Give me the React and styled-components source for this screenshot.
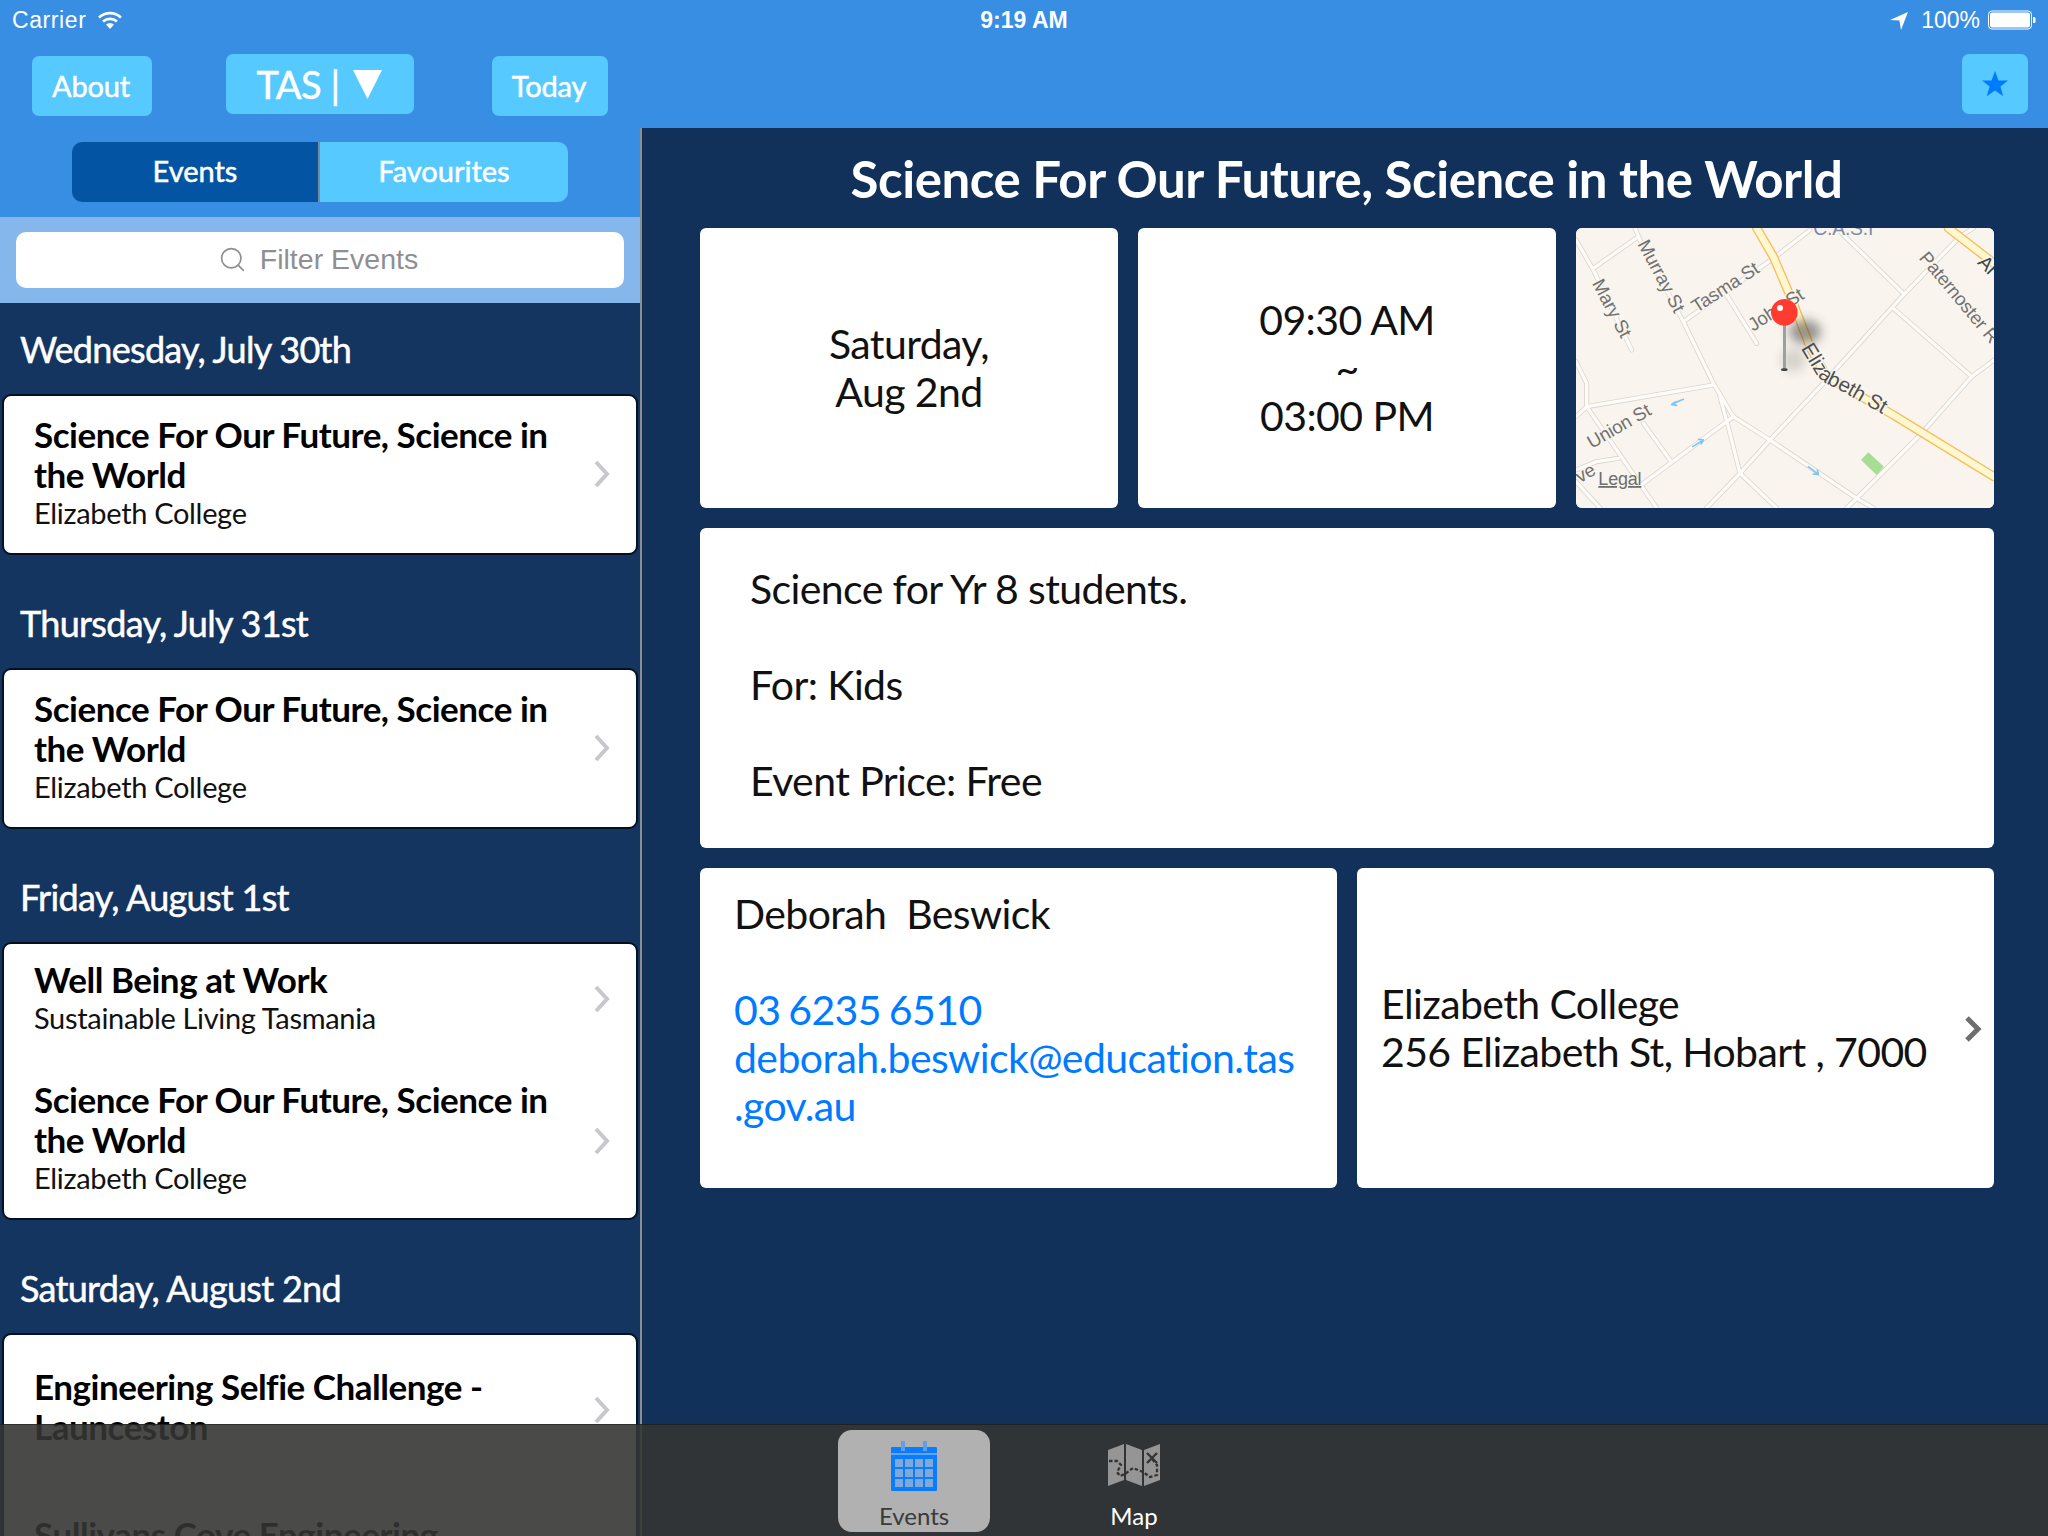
import React from 'react';
import styled, { createGlobalStyle } from 'styled-components';
import { Search } from 'lucide-react';

const GlobalStyle = createGlobalStyle`
  html, body {
    margin: 0;
    padding: 0;
    background: #11305a;
    font-family: 'Lato', 'Liberation Sans', sans-serif;
  }
  * { box-sizing: border-box; }
`;

const Screen = styled.div`
  position: relative;
  width: 2048px;
  height: 1536px;
  overflow: hidden;
  display: grid;
  grid-template-columns: 640px 2px 1fr;
`;

const StatusBar = styled.div`
  position: absolute;
  top: 0;
  left: 0;
  right: 0;
  height: 40px;
  padding: 0 12px;
  display: grid;
  grid-template-columns: 1fr auto 1fr;
  align-items: center;
  color: #fff;
  font-family: 'Liberation Sans', sans-serif;
  font-size: 23px;
  z-index: 5;
`;

const StatusLeft = styled.div`
  display: flex;
  align-items: center;
  gap: 11px;
  letter-spacing: 0.6px;
`;

const StatusTime = styled.div`
  font-weight: 700;
  font-size: 23px;
`;

const StatusRight = styled.div`
  display: flex;
  align-items: center;
  justify-content: flex-end;
  gap: 8px;
`;

const Side = styled.aside`
  height: 1536px;
  overflow: hidden;
  background: #14355f;
  display: flex;
  flex-direction: column;
`;

const Divider = styled.div`
  background: linear-gradient(#388ee3 0 128px, #8e8e8e 128px);
`;

const SideHeader = styled.div`
  flex: none;
  background: #388ee3;
  height: 217px;
  padding: 54px 32px 0;
`;

const NavRow = styled.div`
  display: flex;
  justify-content: space-between;
  align-items: flex-start;
`;

const NavButton = styled.button`
  border: 0;
  width: ${(p) => p.$w}px;
  height: 60px;
  margin-top: 2px;
  padding: 0 2px 2px 0;
  border-radius: 7px;
  background: #56caff;
  color: #fff;
  font-family: inherit;
  font-size: 29px;
  letter-spacing: -0.2px;
  -webkit-text-stroke: 0.5px #fff;
`;

const RegionButton = styled(NavButton)`
  margin-top: 0;
  margin-right: 5px;
  padding: 0;
  font-size: 38px;
  letter-spacing: -0.5px;
  display: flex;
  align-items: center;
  justify-content: center;
  gap: 14px;
`;

const Segment = styled.div`
  margin: 26px 40px 0;
  height: 60px;
  display: grid;
  grid-template-columns: 246px 250px;
  border-radius: 10px;
  overflow: hidden;
`;

const SegmentItem = styled.div`
  display: flex;
  align-items: center;
  justify-content: center;
  padding-bottom: 3px;
  color: #fff;
  font-size: 29px;
  -webkit-text-stroke: 0.5px #fff;
  background: ${(p) => (p.$active ? '#0355a3' : '#56caff')};
  border-left: ${(p) => (p.$active ? '0' : '2px solid #7d8a99')};
`;

const SearchBar = styled.div`
  flex: none;
  height: 86px;
  padding: 15px 16px;
  background: #85b7ec;
`;

const SearchField = styled.div`
  height: 56px;
  padding: 0 4px 1px 0;
  border-radius: 10px;
  background: #fff;
  color: #8e8e93;
  font-family: 'Liberation Sans', sans-serif;
  font-size: 28.5px;
  display: flex;
  align-items: center;
  justify-content: center;
  gap: 13px;
`;

const DayList = styled.div`
  padding: 0 2px;
`;

const DayHeading = styled.h2`
  margin: 0;
  height: 91px;
  padding: 0 0 0 18px;
  display: flex;
  align-items: center;
  color: #fff;
  font-size: 36px;
  font-weight: 400;
  letter-spacing: -0.7px;
  -webkit-text-stroke: 0.5px #fff;
`;

const DayCard = styled.div`
  background: #fff;
  border: 2px solid #05101f;
  border-radius: 9px;
  margin-bottom: 22px;
`;

const EventRow = styled.div`
  position: relative;
  height: ${(p) => p.$h}px;
  padding: ${(p) => p.$pt}px 60px 0 30px;
`;

const EventTitle = styled.div`
  font-size: 35px;
  line-height: 40px;
  font-weight: 700;
  letter-spacing: -0.47px;
  color: #000;
`;

const EventPlace = styled.div`
  margin-top: 1px;
  font-size: 29px;
  line-height: 36px;
  letter-spacing: -0.32px;
  color: #111;
`;

const RowChevron = styled.svg`
  position: absolute;
  right: 25px;
  top: ${(p) => p.$top}px;
  width: 18px;
  height: 28px;
  margin-top: -14px;
  fill: none;
  stroke: #c7c7cc;
  stroke-width: 4;
`;

const Main = styled.main`
  display: flex;
  flex-direction: column;
`;

const MainHeader = styled.div`
  flex: none;
  height: 128px;
  background: #388ee3;
  padding: 54px 20px 0 0;
  display: flex;
  justify-content: flex-end;
  align-items: flex-start;
`;

const StarButton = styled.div`
  width: 66px;
  height: 60px;
  border-radius: 7px;
  background: #56caff;
  display: flex;
  align-items: center;
  justify-content: center;
`;

const MainTitle = styled.h1`
  margin: 0;
  height: 100px;
  display: flex;
  align-items: center;
  justify-content: center;
  padding-left: 3px;
  color: #fff;
  font-size: 51px;
  font-weight: 700;
  letter-spacing: -0.45px;
`;

const Details = styled.div`
  padding: 0 54px 0 58px;
  display: flex;
  flex-direction: column;
  gap: 20px;
`;

const TopCards = styled.div`
  display: grid;
  grid-template-columns: repeat(3, 1fr);
  gap: 20px;
  height: 280px;
`;

const BottomCards = styled.div`
  display: grid;
  grid-template-columns: 1fr 1fr;
  gap: 20px;
  height: 320px;
`;

const Card = styled.div`
  position: relative;
  background: #fff;
  border-radius: 6px;
  color: #111;
  font-size: 41px;
  line-height: 48px;
  letter-spacing: -0.6px;
  overflow: hidden;
`;

const CenterCard = styled(Card)`
  display: flex;
  align-items: center;
  justify-content: center;
  text-align: center;
`;

const DescriptionCard = styled(Card)`
  height: 320px;
  padding: 37px 50px;
`;

const ContactCard = styled(Card)`
  padding: 22px 34px;
  white-space: pre-wrap;
`;

const PlaceCard = styled(Card)`
  display: flex;
  align-items: center;
  padding: 0 24px;
`;

const BlueLink = styled.div`
  color: #007aff;
  word-spacing: -2px;
`;

const PlaceChevron = styled.svg`
  position: absolute;
  right: 11px;
  top: 147px;
  width: 20px;
  height: 28px;
  fill: none;
  stroke: #6e6e6e;
  stroke-width: 5;
`;

const TabBar = styled.nav`
  position: absolute;
  left: 0;
  right: 0;
  bottom: 0;
  height: 112px;
  background: rgba(53, 53, 51, 0.895);
  border-top: 1px solid rgba(0, 0, 0, 0.35);
  display: flex;
  padding: 5px 0 0 838px;
  gap: 68px;
  z-index: 4;
`;

const TabItem = styled.div`
  width: 152px;
  height: 102px;
  border-radius: 14px;
  background: ${(p) => (p.$active ? '#b1b1b1' : 'transparent')};
  color: ${(p) => (p.$active ? '#3a3a3a' : '#fff')};
  font-size: 24px;
  display: flex;
  flex-direction: column;
  align-items: center;
  justify-content: flex-end;
  padding-bottom: 2px;
  gap: ${(p) => (p.$active ? '10px' : '15px')};
`;

const MapLabel = styled.text`
  font-family: 'Liberation Sans', sans-serif;
  font-size: ${(p) => p.$size || 56}px;
  fill: ${(p) => p.$fill || '#717171'};
  stroke: #f9f5ee;
  stroke-width: 8px;
  paint-order: stroke;
`;

const minorRoads = [
  '48,60 100,150 215,390',
  '100,145 235,50',
  '225,24 240,60 370,305 460,490 520,590',
  '370,305 640,115 750,30',
  '500,225 590,370',
  '48,590 80,560 460,495',
  '48,425 80,490 80,560 290,864',
  '250,790 520,590 630,660 890,835 940,864',
  '480,530 510,640 540,760',
  '250,610 330,720',
  '440,864 540,760 630,660 790,490 1030,225 1200,50 1240,24',
  '840,35 1030,220',
  '1000,265 1235,470',
  '1302,420 1235,470 1080,645 890,835 860,864',
  '540,760 650,864',
  '48,750 110,725 175,715',
  '48,785 120,864',
];

const mainRoads = [
  '590,24 640,110 700,250 750,380 800,470 1000,585 1302,770',
  '1165,24 1302,130',
];

const flowArrows = [
  'M370,538 L335,553 M335,553 L348,545 M335,553 L350,556',
  'M398,680 L430,660 M430,660 L416,658 M430,660 L424,672',
  'M745,740 L775,763 M775,763 L760,762 M775,763 L772,750',
];

function MapView() {
  return (
    <svg width="100%" height="100%" viewBox="48 24 1254 840" style={{ display: 'block' }}>
      <defs>
        <filter id="pinShadow" x="-100%" y="-100%" width="300%" height="300%">
          <feGaussianBlur stdDeviation="16" />
        </filter>
        <path id="elizabethCurve" d="M722,385 L770,465 Q790,490 830,505 L1010,606" />
      </defs>
      <rect x="48" y="24" width="1254" height="840" fill="#f9f5ee" />
      <g fill="none" strokeLinejoin="round" strokeLinecap="round">
        {minorRoads.map((r) => (
          <polyline key={r} points={r} stroke="#dcd6ca" strokeWidth="15" />
        ))}
        {minorRoads.map((r) => (
          <polyline key={`${r}-in`} points={r} stroke="#fdfcfa" strokeWidth="10" />
        ))}
        {mainRoads.map((r) => (
          <polyline key={r} points={r} stroke="#f6bd5d" strokeWidth="28" />
        ))}
        {mainRoads.map((r) => (
          <polyline key={`${r}-in`} points={r} stroke="#fff7cf" strokeWidth="20" />
        ))}
        {flowArrows.map((d) => (
          <path key={d} d={d} stroke="#7cc4f8" strokeWidth="5" />
        ))}
      </g>
      <polygon points="925,697 972,740 950,765 903,720" fill="#a9dc95" />
      <MapLabel x="760" y="45" $fill="#7d8aa8" $size="58">C.A.S.I</MapLabel>
      <MapLabel transform="translate(232,72) rotate(62)">Murray St</MapLabel>
      <MapLabel transform="translate(95,190) rotate(62)">Mary St</MapLabel>
      <MapLabel transform="translate(410,280) rotate(-33)">Tasma St</MapLabel>
      <MapLabel transform="translate(580,335) rotate(-33)">John St</MapLabel>
      <MapLabel transform="translate(1075,115) rotate(50)">Paternoster R</MapLabel>
      <MapLabel transform="translate(1250,130) rotate(45)" $fill="#444" $size="58">Ar</MapLabel>
      <MapLabel transform="translate(95,687) rotate(-30)">Union St</MapLabel>
      <MapLabel transform="translate(60,790) rotate(-30)">ve</MapLabel>
      <MapLabel $fill="#4f4f4f" $size="62">
        <textPath href="#elizabethCurve">Elizabeth St</textPath>
      </MapLabel>
      <text x="115" y="795" fontFamily="'Liberation Sans', sans-serif" fontSize="54" fill="#6e6e6e" textDecoration="underline">Legal</text>
      <ellipse cx="735" cy="335" rx="48" ry="36" fill="#333" opacity="0.5" filter="url(#pinShadow)" />
      <ellipse cx="700" cy="420" rx="36" ry="36" fill="#333" opacity="0.18" filter="url(#pinShadow)" />
      <rect x="669" y="315" width="9" height="133" fill="#9aa0a6" />
      <ellipse cx="673" cy="449" rx="10" ry="4" fill="#444" />
      <circle cx="673" cy="277" r="40" fill="#ff3b30" />
      <circle cx="660" cy="264" r="9" fill="#fff" />
    </svg>
  );
}

const science = ['Science For Our Future, Science in', 'the World'];

const days = [
  {
    heading: 'Wednesday, July 30th',
    events: [{ title: science, place: 'Elizabeth College', h: 157, pt: 18, chevron: 78 }],
  },
  {
    heading: 'Thursday, July 31st',
    events: [{ title: science, place: 'Elizabeth College', h: 157, pt: 18, chevron: 78 }],
  },
  {
    heading: 'Friday, August 1st',
    events: [
      { title: ['Well Being at Work'], place: 'Sustainable Living Tasmania', h: 119, pt: 15, chevron: 55 },
      { title: science, place: 'Elizabeth College', h: 155, pt: 16, chevron: 78 },
    ],
  },
  {
    heading: 'Saturday, August 2nd',
    events: [
      { title: ['Engineering Selfie Challenge -', 'Launceston'], h: 160, pt: 31, chevron: 75 },
      { title: ['Sullivans Cove Engineering'], h: 120, pt: 19, chevron: 78 },
    ],
  },
];

export default function App() {
  return (
    <Screen>
      <GlobalStyle />
      <StatusBar>
        <StatusLeft>
          Carrier
          <svg width="26" height="20" viewBox="0 0 26 20" fill="none" stroke="#fff" strokeWidth="2.6">
            <path d="M2 7.500a16 16 0 0 1 22 0" />
            <path d="M6 11.500a10.500 10.500 0 0 1 14 0" />
            <path d="M13 19l-4-4.500a6 6 0 0 1 8 0z" fill="#fff" stroke="none" />
          </svg>
        </StatusLeft>
        <StatusTime>9:19 AM</StatusTime>
        <StatusRight>
          <svg width="20" height="20" viewBox="0 0 20 20" style={{ marginRight: 4 }}>
            <path d="M1 10L19 2l-7 18-1.600-9.600z" fill="#fff" />
          </svg>
          100%
          <svg width="48" height="20" viewBox="0 0 48 20">
            <rect x="0.500" y="1" width="43" height="18" rx="3.500" fill="none" stroke="#fff" />
            <rect x="2" y="2.500" width="40" height="15" rx="2" fill="#fff" />
            <path d="M45 7h1a1.500 1.500 0 0 1 1.500 1.500v3a1.500 1.500 0 0 1-1.500 1.500h-1z" fill="#fff" />
          </svg>
        </StatusRight>
      </StatusBar>

      <Side>
        <SideHeader>
          <NavRow>
            <NavButton $w={120}>About</NavButton>
            <RegionButton $w={188}>
              TAS |
              <svg width="29" height="29" viewBox="0 0 29 29">
                <path d="M0 0h29L14.500 29z" fill="#fff" />
              </svg>
            </RegionButton>
            <NavButton $w={116}>Today</NavButton>
          </NavRow>
          <Segment>
            <SegmentItem $active>Events</SegmentItem>
            <SegmentItem>Favourites</SegmentItem>
          </Segment>
        </SideHeader>
        <SearchBar>
          <SearchField>
            <Search size={29} strokeWidth={1.4} color="#8e8e93" />
            Filter Events
          </SearchField>
        </SearchBar>
        <DayList>
          {days.map((day) => (
            <section key={day.heading}>
              <DayHeading>{day.heading}</DayHeading>
              <DayCard>
                {day.events.map((ev) => (
                  <EventRow key={ev.title[0]} $h={ev.h} $pt={ev.pt}>
                    <EventTitle>
                      {ev.title.map((line) => (
                        <div key={line}>{line}</div>
                      ))}
                    </EventTitle>
                    {ev.place && <EventPlace>{ev.place}</EventPlace>}
                    <RowChevron $top={ev.chevron} viewBox="0 0 18 28">
                      <path d="M3 2l11 12L3 26" />
                    </RowChevron>
                  </EventRow>
                ))}
              </DayCard>
            </section>
          ))}
        </DayList>
      </Side>

      <Divider />

      <Main>
        <MainHeader>
          <StarButton>
            <svg width="28" height="28" viewBox="0 0 28 28">
              <path d="M14 1l3.500 9.500H27l-7.600 6 2.800 9.700L14 20.600 5.800 26.200l2.800-9.700L1 10.500h9.500z" fill="#007aff" />
            </svg>
          </StarButton>
        </MainHeader>
        <MainTitle>Science For Our Future, Science in the World</MainTitle>
        <Details>
          <TopCards>
            <CenterCard>
              <div>Saturday,<br />Aug 2nd</div>
            </CenterCard>
            <CenterCard>
              <div>09:30 AM<br />~<br />03:00 PM</div>
            </CenterCard>
            <Card>
              <MapView />
            </Card>
          </TopCards>
          <DescriptionCard>
            <div>Science for Yr 8 students.</div>
            <br />
            <div>For: Kids</div>
            <br />
            <div>Event Price: Free</div>
          </DescriptionCard>
          <BottomCards>
            <ContactCard>
              <div>Deborah  Beswick</div>
              <br />
              <BlueLink>03 6235 6510</BlueLink>
              <BlueLink>deborah.beswick@education.tas<br />.gov.au</BlueLink>
            </ContactCard>
            <PlaceCard>
              <div>Elizabeth College<br />256 Elizabeth St, Hobart , 7000</div>
              <PlaceChevron viewBox="0 0 20 28">
                <path d="M4 3l11 11L4 25" />
              </PlaceChevron>
            </PlaceCard>
          </BottomCards>
        </Details>
      </Main>

      <TabBar>
        <TabItem $active>
          <svg width="46" height="50" viewBox="0 0 46 50">
            <rect x="0" y="6" width="46" height="44" rx="1" fill="#0a7cff" />
            <rect x="0" y="12" width="46" height="2" fill="#65a3eb" />
            <rect x="10" y="0" width="4" height="10" fill="#5f9fe8" />
            <rect x="32" y="0" width="4" height="10" fill="#5f9fe8" />
            {[18, 28, 38].map((y) =>
              [4, 14, 24, 34].map((x) => (
                <rect key={`${x}-${y}`} x={x} y={y} width="8" height="8" fill="#7fa9d8" />
              ))
            )}
          </svg>
          Events
        </TabItem>
        <TabItem>
          <svg width="52" height="42" viewBox="0 0 52 42">
            <path d="M0 6L16 0v36L0 42zM18 0l16 6v36l-16-6zM36 6L52 0v36l-16 6z" fill="#959595" />
            <path d="M1 17h8l4 4-4 7 3 4 5-2 8-6 10 4 7 5 7-2v-10l-5-6" fill="none" stroke="#333" strokeWidth="2.300" strokeDasharray="3.500 2" />
            <path d="M39 9l10 10M49 9L39 19" stroke="#333" strokeWidth="2.300" />
          </svg>
          Map
        </TabItem>
      </TabBar>
    </Screen>
  );
}
